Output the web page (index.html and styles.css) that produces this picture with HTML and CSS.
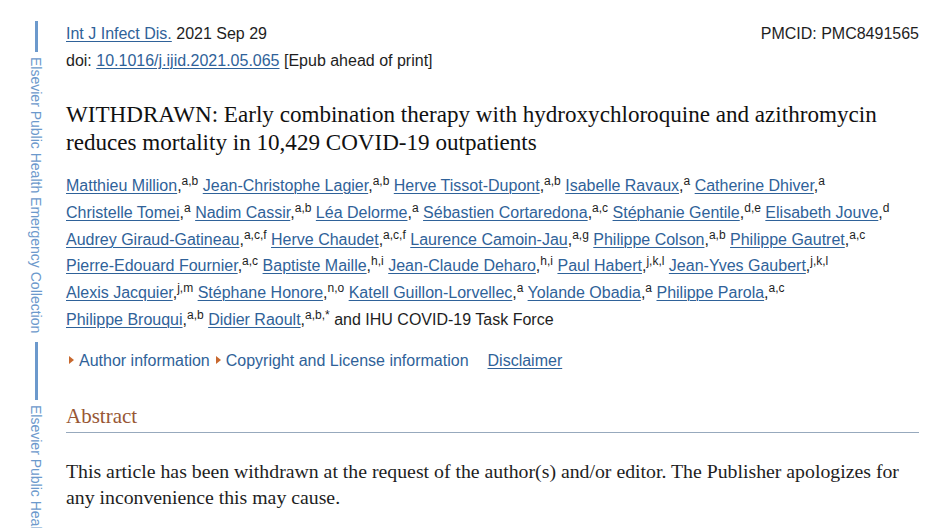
FILE: index.html
```html
<!DOCTYPE html>
<html>
<head>
<meta charset="utf-8">
<link rel="stylesheet" href="styles.css">
</head>
<body>
<div class="page">
  <aside class="collection">
    <span class="bar bar-short"></span>
    <span class="collection-text">Elsevier Public Health Emergency Collection</span>
    <span class="bar bar-long"></span>
    <span class="collection-text">Elsevier Public Health Emergency Collection</span>
  </aside>
  <main class="article">
    <div class="citation">
      <div class="citation-left">
        <div><a href="#">Int J Infect Dis.</a> 2021 Sep 29</div>
        <div>doi: <a href="#">10.1016/j.ijid.2021.05.065</a> [Epub ahead of print]</div>
      </div>
      <div class="pmcid">PMCID: PMC8491565</div>
    </div>
    <h1 class="title">WITHDRAWN: Early combination therapy with hydroxychloroquine and azithromycin reduces mortality in 10,429 COVID-19 outpatients</h1>
    <div class="authors">
      <div class="author-line"><a href="#">Matthieu Million</a>,<sup>a,b</sup> <a href="#">Jean-Christophe Lagier</a>,<sup>a,b</sup> <a href="#">Herve Tissot-Dupont</a>,<sup>a,b</sup> <a href="#">Isabelle Ravaux</a>,<sup>a</sup> <a href="#">Catherine Dhiver</a>,<sup>a</sup></div>
      <div class="author-line"><a href="#">Christelle Tomei</a>,<sup>a</sup> <a href="#">Nadim Cassir</a>,<sup>a,b</sup> <a href="#">Léa Delorme</a>,<sup>a</sup> <a href="#">Sébastien Cortaredona</a>,<sup>a,c</sup> <a href="#">Stéphanie Gentile</a>,<sup>d,e</sup> <a href="#">Elisabeth Jouve</a>,<sup>d</sup></div>
      <div class="author-line"><a href="#">Audrey Giraud-Gatineau</a>,<sup>a,c,f</sup> <a href="#">Herve Chaudet</a>,<sup>a,c,f</sup> <a href="#">Laurence Camoin-Jau</a>,<sup>a,g</sup> <a href="#">Philippe Colson</a>,<sup>a,b</sup> <a href="#">Philippe Gautret</a>,<sup>a,c</sup></div>
      <div class="author-line"><a href="#">Pierre-Edouard Fournier</a>,<sup>a,c</sup> <a href="#">Baptiste Maille</a>,<sup>h,i</sup> <a href="#">Jean-Claude Deharo</a>,<sup>h,i</sup> <a href="#">Paul Habert</a>,<sup>j,k,l</sup> <a href="#">Jean-Yves Gaubert</a>,<sup>j,k,l</sup></div>
      <div class="author-line"><a href="#">Alexis Jacquier</a>,<sup>j,m</sup> <a href="#">Stéphane Honore</a>,<sup>n,o</sup> <a href="#">Katell Guillon-Lorvellec</a>,<sup>a</sup> <a href="#">Yolande Obadia</a>,<sup>a</sup> <a href="#">Philippe Parola</a>,<sup>a,c</sup></div>
      <div class="author-line"><a href="#">Philippe Brouqui</a>,<sup>a,b</sup> <a href="#">Didier Raoult</a>,<sup>a,b,*</sup> and IHU COVID-19 Task Force</div>
    </div>
    <div class="info-links">
      <span class="toggle"><span class="arrow"></span>Author information</span>
      <span class="toggle"><span class="arrow"></span>Copyright and License information</span>
      <a class="disclaimer" href="#">Disclaimer</a>
    </div>
    <h2 class="section-head">Abstract</h2>
    <p class="abstract">This article has been withdrawn at the request of the author(s) and/or editor. The Publisher apologizes for any inconvenience this may cause.</p>
  </main>
</div>
</body>
</html>
```

FILE: styles.css
```css
html, body {
  margin: 0;
  padding: 0;
  background: #ffffff;
}

body {
  font-family: "Liberation Sans", Arial, Helvetica, sans-serif;
  font-size: 16px;
  color: #1e1e1e;
  overflow: hidden;
}

a {
  color: #2f6299;
  text-decoration: underline;
  text-underline-offset: 2px;
  text-decoration-thickness: 1px;
}

.page {
  display: flex;
  align-items: flex-start;
  height: 528px;
  overflow: hidden;
}

.collection {
  flex: 0 0 16px;
  margin-left: 28px;
  margin-right: 22px;
  padding-top: 21px;
  display: flex;
  flex-direction: column;
  align-items: center;
}

.bar {
  display: block;
  width: 3px;
  background: #6c99cc;
}

.bar-short {
  height: 31px;
}

.bar-long {
  height: 58px;
}

.collection-text {
  writing-mode: vertical-rl;
  font-size: 14px;
  line-height: 16px;
  color: #6c99cc;
  white-space: nowrap;
  margin-top: 5px;
  margin-bottom: 9px;
}

.article {
  flex: 1;
  padding-top: 20px;
  padding-right: 13px;
}

.citation {
  display: flex;
  justify-content: space-between;
  line-height: 27px;
}

.title {
  margin: 26px 0 0;
  font-family: "Liberation Serif", "Times New Roman", serif;
  font-weight: normal;
  font-size: 23.1px;
  line-height: 28px;
  color: #111111;
}

.authors {
  margin-top: 17px;
  line-height: 26.8px;
}

.author-line {
  white-space: nowrap;
}

sup {
  font-size: 12px;
  line-height: 0;
  vertical-align: 6px;
}

.info-links {
  margin-top: 13px;
  line-height: 27px;
  display: flex;
  align-items: center;
}

.toggle {
  display: inline-flex;
  align-items: center;
  color: #2f6299;
  margin-right: 3px;
}

.arrow {
  display: inline-block;
  width: 0;
  height: 0;
  border-top: 4px solid transparent;
  border-bottom: 4px solid transparent;
  border-left: 5px solid #c8682e;
  margin-left: 3px;
  margin-right: 5px;
}

.disclaimer {
  margin-left: 16px;
}

.section-head {
  margin: 29px 0 0;
  font-family: "Liberation Serif", "Times New Roman", serif;
  font-weight: normal;
  font-size: 21px;
  line-height: 26px;
  color: #985735;
  padding-bottom: 3px;
  border-bottom: 1px solid #97a9bd;
}

.abstract {
  margin: 25px 0 0;
  font-family: "Liberation Serif", "Times New Roman", serif;
  font-size: 19.8px;
  line-height: 26px;
  color: #1e1e1e;
}
```
